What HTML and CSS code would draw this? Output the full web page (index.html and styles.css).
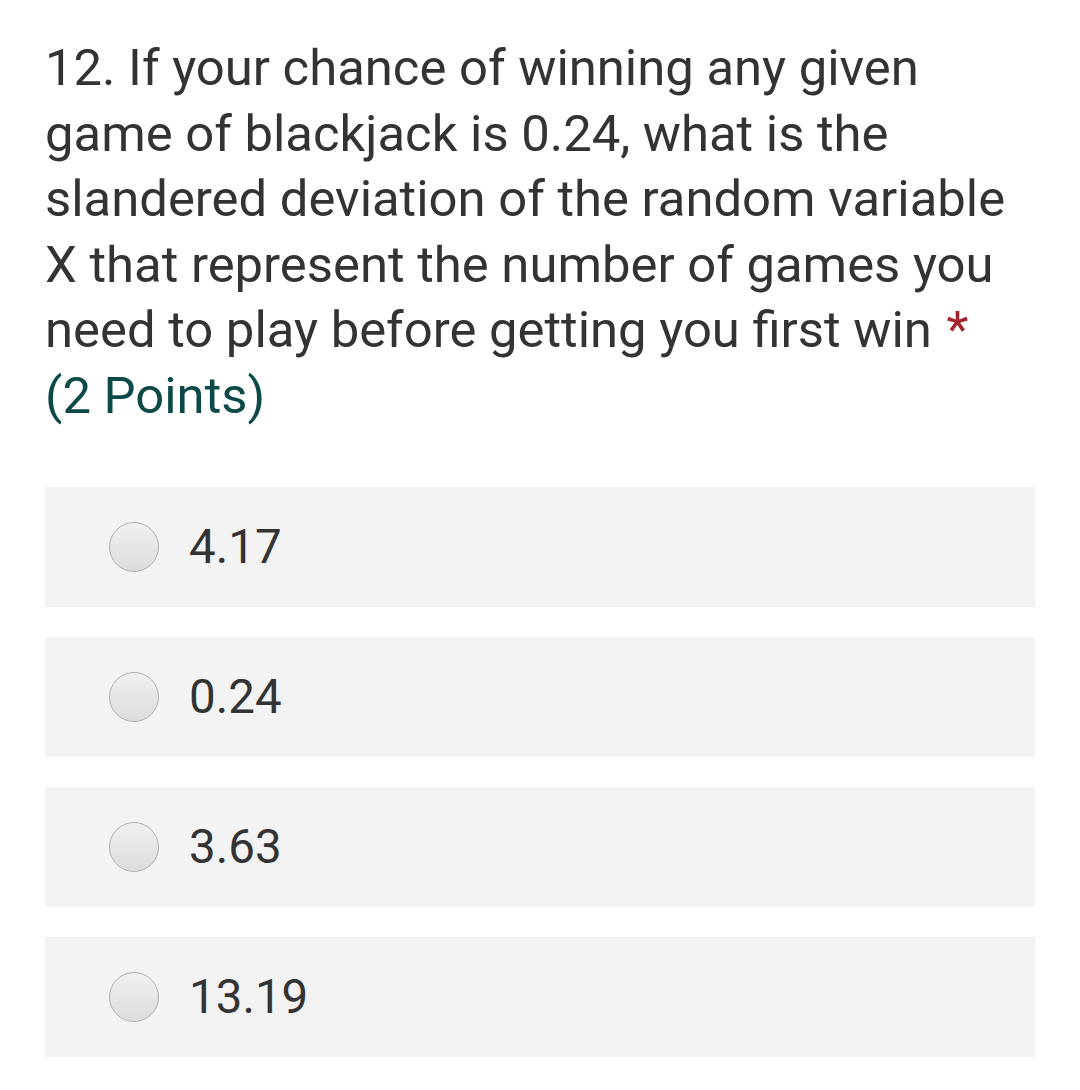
FILE: index.html
```html
<!DOCTYPE html>
<html>
<head>
<meta charset="utf-8">
<link rel="stylesheet" href="styles.css">
</head>
<body>
<div class="page">
  <div class="question">
    12. If your chance of winning any given game of blackjack is 0.24, what is the slandered deviation of the random variable X that represent the number of games you need to play before getting you first win <span class="req">*</span><br>
    <span class="points">(2 Points)</span>
  </div>
  <div class="options">
    <div class="option"><span class="radio"></span><span class="label">4.17</span></div>
    <div class="option"><span class="radio"></span><span class="label">0.24</span></div>
    <div class="option"><span class="radio"></span><span class="label">3.63</span></div>
    <div class="option"><span class="radio"></span><span class="label">13.19</span></div>
  </div>
</div>
</body>
</html>
```
FILE: styles.css
```css
html, body {
  margin: 0;
  padding: 0;
  background: #ffffff;
}
.page {
  font-family: Roboto, "Noto Sans", sans-serif;
  color: #333333;
  padding: 35px 45px 0 45px;
  width: 990px;
}
.question {
  font-size: 50.8px;
  line-height: 65.6px;
  width: 990px;
}
.req {
  color: #a4262c;
  margin-left: 2px;
  line-height: 1;
}
.points {
  color: #0b4a48;
}
.options {
  margin-top: 58px;
  display: flex;
  flex-direction: column;
  gap: 30px;
}
.option {
  background: #f3f3f3;
  height: 120px;
  display: flex;
  align-items: center;
  padding-left: 64px;
}
.radio {
  width: 50px;
  height: 50px;
  border-radius: 50%;
  border: 1px solid #b0b0b0;
  background: linear-gradient(#f0f0f0, #dcdcdc);
  box-sizing: border-box;
  flex: none;
}
.label {
  font-size: 47.5px;
  margin-left: 30px;
}
```
